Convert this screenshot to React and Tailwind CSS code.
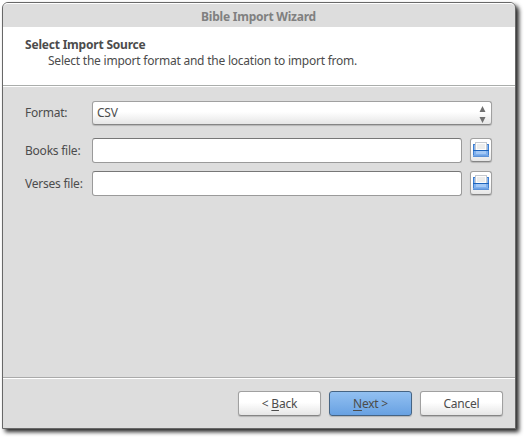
import React from "react";

const raised =
  "rounded-[3px] border border-[#a0a0a0] border-b-[#858585] bg-linear-to-b from-white from-45% to-[#e6e6e6] shadow-[0_1px_1px_rgba(0,0,0,0.18)]";

function FolderIcon() {
  return (
    <svg width="16" height="15" viewBox="0 0 16 15" shapeRendering="crispEdges">
      <path d="M0 2h16v13H0z" fill="#3d7fd3" />
      <path d="M1 3h14v5H1z" fill="#8ab6ee" />
      <path d="M2 0h12v8H2z" fill="#c4c8ce" />
      <path d="M3 1h10v7H3z" fill="#fdfdfd" />
      <path d="M4 2h8v5H4z" fill="#ededec" />
      <path d="M1 9h14v5H1z" fill="#7fb0ee" />
      <path d="M3 9h10v3H3z" fill="#a3c8f5" />
      <path d="M0 8h16v1H0z" fill="#1d64bd" />
      <path d="M0 13h16v1H0z" fill="#6fa3e4" />
      <path d="M0 14h16v1H0z" fill="#5c92d8" />
    </svg>
  );
}

function FileRow({ label, className }) {
  return (
    <div className={`flex h-[25px] items-center ${className}`}>
      <label className="w-[67px] shrink-0">{label}</label>
      <input className="h-[25px] w-[370px] rounded-[3px] border border-[#9a9a9a] border-t-[#777] bg-white outline-none" />
      <button className={`ml-2 flex h-6 w-[22px] items-start justify-center self-start pt-[3px] ${raised}`}>
        <FolderIcon />
      </button>
    </div>
  );
}

export default function App() {
  return (
    <div className="h-[437px] w-[524px] overflow-hidden bg-white pt-[2px] pl-[2px] font-['Noto_Sans','Open_Sans',sans-serif] text-[12px] leading-4 tracking-[-0.23px] whitespace-nowrap text-[#4c4c4c]">
      <div className="flex h-[427px] w-[514px] flex-col rounded-t-[6px] border border-[#686868] bg-[#dddddd] shadow-[3px_3px_4px_rgba(0,0,0,0.85)]">
        <header className="flex h-[24px] shrink-0 items-center justify-center rounded-t-[5px] border-t border-white pt-[3px] pr-px font-bold text-[#808080]">
          <span>Bible Import Wizard</span>
        </header>
        <section className="h-[60px] shrink-0 border-b border-white bg-white pt-[10px] pl-[22px] shadow-[inset_0_-1px_0_#aaadab]">
          <h1 className="font-bold tracking-[-0.2px]">Select Import Source</h1>
          <p className="pl-[23px]">Select the import format and the location to import from.</p>
        </section>
        <main className="flex-1 pt-[14px] pl-[22px]">
          <div className="flex h-6 items-center">
            <label className="w-[67px] shrink-0">Format:</label>
            <div className={`flex h-6 w-[400px] items-center justify-between pr-[5px] pl-1 ${raised}`}>
              <span>CSV</span>
              <svg width="7" height="18" viewBox="0 0 7 18" className="mt-1">
                <path d="M0.5 6 3.5 0 6.5 6zM0.5 11h6l-3 6z" fill="#707070" />
              </svg>
            </div>
          </div>
          <FileRow label="Books file:" className="mt-[13px]" />
          <FileRow label="Verses file:" className="mt-2" />
        </main>
        <footer className="flex h-[51px] shrink-0 gap-2 border-t border-[#aaa] pt-[13px] pl-[235px] shadow-[inset_0_1px_0_#fff]">
          <button className={`h-[25px] w-[83px] tracking-[-0.23px] ${raised}`}>
            &lt; <span className="underline underline-offset-2">B</span>ack
          </button>
          <button className="h-[25px] w-[83px] rounded-[3px] border border-[#456484] bg-linear-to-b from-[#92c0f1] to-[#68a1e2] tracking-[-0.23px] shadow-[0_1px_1px_rgba(0,0,0,0.18)]">
            <span className="underline underline-offset-2">N</span>ext &gt;
          </button>
          <button className={`h-[25px] w-[83px] tracking-[-0.23px] ${raised}`}>Cancel</button>
        </footer>
      </div>
    </div>
  );
}
